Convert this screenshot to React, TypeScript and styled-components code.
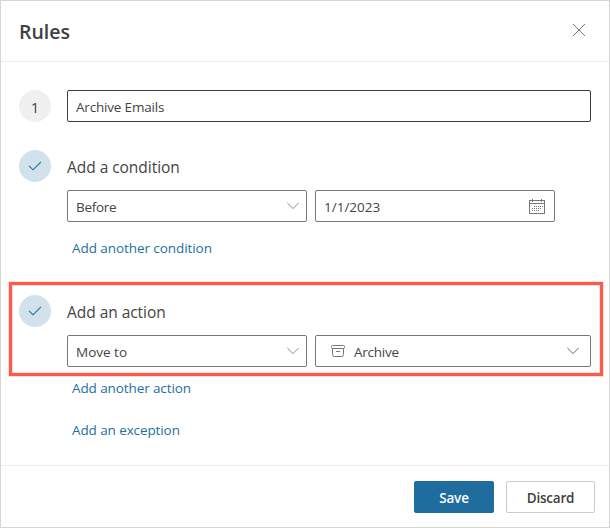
import React from "react";
import styled, { createGlobalStyle } from "styled-components";

const Global = createGlobalStyle`
  * { box-sizing: border-box; }
  body { margin: 0; background: #fff; font-family: "Open Sans", "Noto Sans", sans-serif; color: #444; }
  button, input { font-family: inherit; color: inherit; }
`;

const Panel = styled.div`
  width: 610px;
  height: 528px;
  border: 1px solid #d6d4d5;
  display: flex;
  flex-direction: column;
  background: #fff;
`;

const Header = styled.header`
  height: 61px;
  flex: none;
  border-bottom: 1px solid #ededed;
  padding: 0 23px 0 18px;
  display: flex;
  justify-content: space-between;
  align-items: center;
`;

const Title = styled.h1`
  margin: 0;
  padding-top: 2px;
  font-size: 19.5px;
  line-height: 26px;
  font-weight: 600;
  letter-spacing: 0;
  color: #404040;
`;

const IconButton = styled.button`
  border: 0;
  padding: 0;
  background: none;
  display: flex;
  margin-top: -2px;
`;

const Body = styled.main`
  flex: 1;
  padding: 28px 18px 0;
`;

const Step = styled.section<{ $gap?: number }>`
  display: grid;
  grid-template-columns: 32px 1fr;
  column-gap: 16px;
  margin-bottom: ${(p) => p.$gap ?? 0}px;
`;

const Badge = styled.div<{ $done?: boolean }>`
  width: 32px;
  height: 32px;
  border-radius: 50%;
  display: flex;
  align-items: center;
  justify-content: center;
  font-size: 15px;
  padding-top: ${(p) => (p.$done ? 0 : 2)}px;
  background: ${(p) => (p.$done ? "#d1e2ed" : "#f0f0f0")};
`;

const NameInput = styled.input`
  width: 524px;
  height: 32px;
  border: 1px solid #3c3c3c;
  border-radius: 2px;
  padding: 2px 8px 0;
  font-size: 13.5px;
  letter-spacing: -0.18px;
  outline: none;
`;

const StepTitle = styled.h2`
  margin: 0;
  height: 40px;
  font-size: 15.5px;
  line-height: 35px;
  font-weight: 400;
  letter-spacing: -0.04px;
`;

const Fields = styled.div`
  display: flex;
  gap: 8px;
`;

const Field = styled.div<{ $width: number; $inset?: number }>`
  width: ${(p) => p.$width}px;
  height: 32px;
  border: 1px solid #777;
  border-radius: 2px;
  padding: 0 ${(p) => p.$inset ?? 7}px 0 8px;
  display: flex;
  align-items: center;
  justify-content: space-between;
`;

const Value = styled.span<{ $spacing: number }>`
  display: flex;
  align-items: center;
  font-size: 13.5px;
  line-height: 20px;
  padding-top: 2px;
  letter-spacing: ${(p) => p.$spacing}px;
`;

const FolderIcon = styled.svg`
  margin: -2px 9px 0 7px;
`;

const Link = styled.a<{ $top: number; $spacing: number }>`
  display: block;
  width: max-content;
  margin: ${(p) => p.$top}px 0 0 5px;
  font-size: 13.5px;
  line-height: 20px;
  letter-spacing: ${(p) => p.$spacing}px;
  color: #1c70a3;
`;

const Footer = styled.footer`
  height: 62px;
  flex: none;
  border-top: 1px solid #ededed;
  padding: 15px 14px 0 0;
  display: flex;
  justify-content: flex-end;
  gap: 12px;
`;

const Button = styled.button<{ $primary?: boolean }>`
  width: ${(p) => (p.$primary ? 80 : 89)}px;
  height: 32px;
  border: 1px solid ${(p) => (p.$primary ? "#1f6c9f" : "#cbcbcb")};
  border-radius: 2px;
  padding: 2px 0 0;
  background: ${(p) => (p.$primary ? "#1f6c9f" : "#fff")};
  color: ${(p) => (p.$primary ? "#fff" : "#404040")};
  font-size: 13.5px;
  font-weight: 600;
  letter-spacing: -0.2px;
`;

/* Callout frame laid over the action step. */
const Highlight = styled.div`
  position: absolute;
  left: 9px;
  top: 282px;
  width: 594px;
  height: 94px;
  border: 3px solid #fd5a4e;
  box-shadow: 0 0 0 1px #fd5a4e30, inset 0 0 0 1px #fd5a4e30;
  pointer-events: none;
`;

const Check = () => (
  <svg width="14" height="10" viewBox="0 0 14 10" fill="none" stroke="#1c6fa2" strokeWidth="1.1">
    <path d="M1 4.8 5 8.8 13 0.8" />
  </svg>
);

const Chevron = ({ color = "#8b8b8b" }: { color?: string }) => (
  <svg width="12" height="8" viewBox="0 0 12 8" fill="none" stroke={color} strokeWidth="1">
    <path d="M.4 1 6 6.6 11.6 1" />
  </svg>
);

const Calendar = () => (
  <svg width="16" height="16" viewBox="0 0 16 16" fill="none" stroke="#777" shapeRendering="crispEdges">
    <path d="M.5 2.5h15v13H.5zM.5 5.5h15M3.5 1v3M12.5 1v3" />
    <path d="M5 8.5h9M3 10.5h10M3 12.5h8" strokeDasharray="1 1" />
  </svg>
);

export default function App() {
  return (
    <>
      <Global />
      <Panel>
        <Header>
          <Title>Rules</Title>
          <IconButton aria-label="Close">
            <svg width="14" height="14" viewBox="0 0 14 14" stroke="#777" strokeWidth="1">
              <path d="M1 1 13 13M13 1 1 13" />
            </svg>
          </IconButton>
        </Header>
        <Body>
          <Step $gap={28}>
            <Badge>1</Badge>
            <NameInput defaultValue="Archive Emails" />
          </Step>
          <Step $gap={37}>
            <Badge $done><Check /></Badge>
            <div>
              <StepTitle>Add a condition</StepTitle>
              <Fields>
                <Field $width={240}>
                  <Value $spacing={-0.3}>Before</Value>
                  <Chevron />
                </Field>
                <Field $width={240} $inset={9}>
                  <Value $spacing={0}>1/1/2023</Value>
                  <Calendar />
                </Field>
              </Fields>
              <Link $top={16} $spacing={-0.07}>Add another condition</Link>
            </div>
          </Step>
          <Step>
            <Badge $done><Check /></Badge>
            <div>
              <StepTitle>Add an action</StepTitle>
              <Fields>
                <Field $width={240}>
                  <Value $spacing={0}>Move to</Value>
                  <Chevron />
                </Field>
                <Field $width={276} $inset={11}>
                  <Value $spacing={-0.25}>
                    <FolderIcon width="14" height="13" viewBox="0 0 14 13" fill="none" stroke="#777">
                      <rect x=".5" y=".5" width="13" height="3" rx="1" />
                      <path d="M1.5 3.5v6a2 2 0 0 0 2 2h7a2 2 0 0 0 2-2v-6M5 6.5h4" />
                    </FolderIcon>
                    Archive
                  </Value>
                  <Chevron color="#666" />
                </Field>
              </Fields>
              <Link $top={11} $spacing={-0.1}>Add another action</Link>
              <Link $top={22} $spacing={-0.1}>Add an exception</Link>
            </div>
          </Step>
        </Body>
        <Footer>
          <Button $primary>Save</Button>
          <Button>Discard</Button>
        </Footer>
      </Panel>
      <Highlight />
    </>
  );
}
